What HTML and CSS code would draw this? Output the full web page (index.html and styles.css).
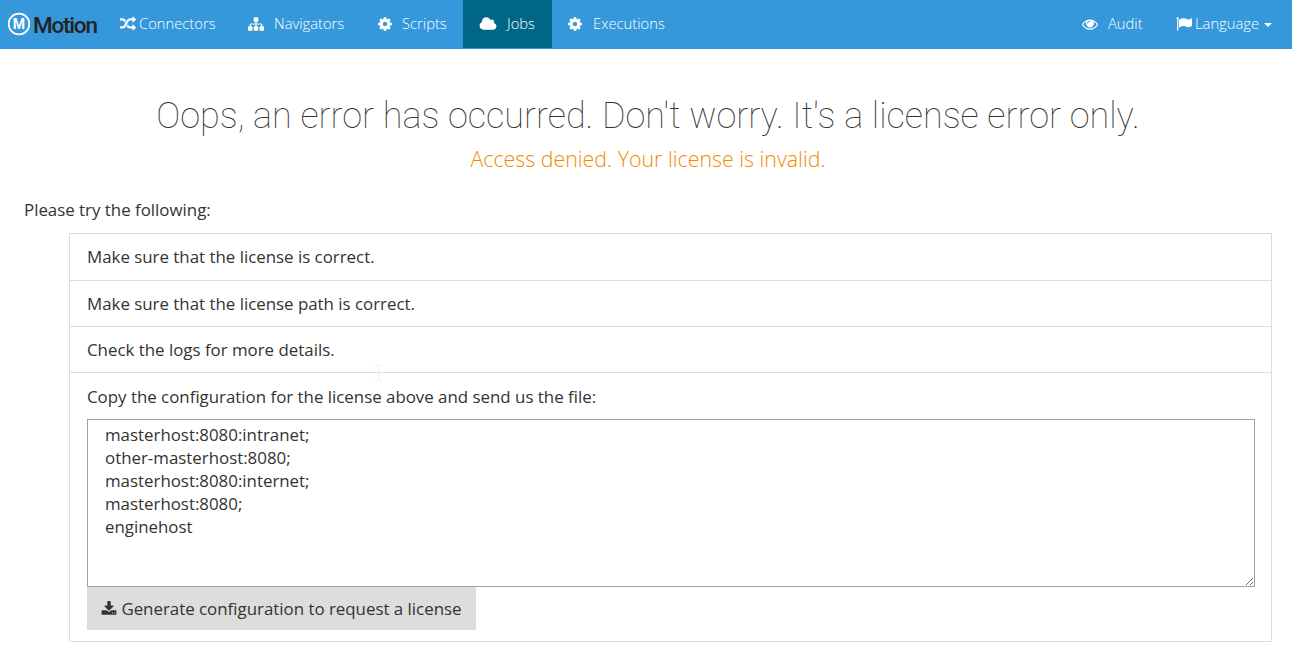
FILE: index.html
```html
<!DOCTYPE html>
<html lang="en">
<head>
<meta charset="utf-8">
<meta name="viewport" content="width=device-width, initial-scale=1">
<title>Motion</title>
<link rel="stylesheet" href="styles.css">
</head>
<body>

<nav class="navbar">
  <a class="brand" href="#">
    <svg class="brand-logo" viewBox="0 0 24 24">
      <circle cx="12" cy="12" r="10.3" fill="none" stroke="#fff" stroke-width="1.7"/>
      <text class="brand-letter" x="12" y="17" text-anchor="middle">M</text>
    </svg>
    <span class="brand-name">Motion</span>
  </a>
  <ul class="menu">
    <li><a class="connectors" href="#"><svg class="icon" viewBox="0 0 1792 1792"><path d="M666 481q-60 92-137 273-22-45-37-72.5t-40.5-63.5-51-56.5-63-35-81.5-14.5h-224q-14 0-23-9t-9-23v-192q0-14 9-23t23-9h224q250 0 410 225zm1126 799q0 14-9 23l-320 320q-9 9-23 9-13 0-22.5-9.5t-9.5-22.5v-192q-32 0-85 .5t-81 1-73-1-71-5-64-10.5-63-18.5-58-28.5-59-40-55-53.5-56-69.5q59-93 136-273 22 45 37 72.5t40.5 63.5 51 56.5 63 35 81.5 14.5h256v-192q0-14 9-23t23-9q12 0 24 10l319 319q9 9 9 23zm0-896q0 14-9 23l-320 320q-9 9-23 9-13 0-22.5-9.5t-9.5-22.5v-192h-256q-48 0-87 15t-69 45-51 61.5-45 77.5q-32 62-78 171-29 66-49.5 111t-54 105-64 100-74 83-90 68.5-106.5 42-128 16.5h-224q-14 0-23-9t-9-23v-192q0-14 9-23t23-9h224q48 0 87-15t69-45 51-61.5 45-77.5q32-62 78-171 29-66 49.5-111t54-105 64-100 74-83 90-68.5 106.5-42 128-16.5h256v-192q0-14 9-23t23-9q12 0 24 10l319 319q9 9 9 23z"/></svg><span>Connectors</span></a></li>
    <li><a class="navigators" href="#"><svg class="icon" viewBox="0 0 1792 1792"><path d="M1792 1248v320q0 40-28 68t-68 28h-320q-40 0-68-28t-28-68v-320q0-40 28-68t68-28h96v-192h-512v192h96q40 0 68 28t28 68v320q0 40-28 68t-68 28h-320q-40 0-68-28t-28-68v-320q0-40 28-68t68-28h96v-192h-512v192h96q40 0 68 28t28 68v320q0 40-28 68t-68 28h-320q-40 0-68-28t-28-68v-320q0-40 28-68t68-28h96v-192q0-52 38-90t90-38h512v-192h-96q-40 0-68-28t-28-68v-320q0-40 28-68t68-28h320q40 0 68 28t28 68v320q0 40-28 68t-68 28h-96v192h512q52 0 90 38t38 90v192h96q40 0 68 28t28 68z"/></svg><span>Navigators</span></a></li>
    <li><a class="scripts" href="#"><svg class="icon" viewBox="0 0 1792 1792"><path d="M1152 896q0-106-75-181t-181-75-181 75-75 181 75 181 181 75 181-75 75-181zm512-109v222q0 12-8 23t-20 13l-185 28q-19 54-39 91 35 50 107 138 10 12 10 25t-9 23q-27 37-99 108t-94 71q-12 0-26-9l-138-108q-44 23-91 38-16 136-29 186-7 28-36 28h-222q-14 0-24.5-8.5t-11.5-21.5l-28-184q-49-16-90-37l-141 107q-10 9-25 9-14 0-25-11-126-114-165-168-7-10-7-23 0-12 8-23 15-21 51-66.5t54-70.5q-27-50-41-99l-183-27q-13-2-21-12.5t-8-23.5v-222q0-12 8-23t19-13l186-28q14-46 39-92-40-57-107-138-10-12-10-24 0-10 9-23 26-36 98.5-107.5t94.5-71.5q13 0 26 10l138 107q44-23 91-38 16-136 29-186 7-28 36-28h222q14 0 24.5 8.5t11.5 21.5l28 184q49 16 90 37l142-107q9-9 24-9 13 0 25 10 129 119 165 170 7 8 7 22 0 12-8 23-15 21-51 66.5t-54 70.5q26 50 41 98l183 28q13 2 21 12.5t8 23.5z"/></svg><span>Scripts</span></a></li>
    <li class="active"><a class="jobs" href="#"><svg class="icon icon-cloud" viewBox="0 0 2048 1792"><path d="M1984 1152q0 159-112.5 271.5t-271.5 112.5h-1088q-185 0-316.5-131.5t-131.5-316.5q0-132 71-241.5t187-163.5q-2-28-2-43 0-212 150-362t362-150q158 0 286.5 88t187.5 230q70-62 166-62 106 0 181 75t75 181q0 75-41 138 129 30 213 134.5t84 239.5z"/></svg><span>Jobs</span></a></li>
    <li><a class="executions" href="#"><svg class="icon" viewBox="0 0 1792 1792"><path d="M1152 896q0-106-75-181t-181-75-181 75-75 181 75 181 181 75 181-75 75-181zm512-109v222q0 12-8 23t-20 13l-185 28q-19 54-39 91 35 50 107 138 10 12 10 25t-9 23q-27 37-99 108t-94 71q-12 0-26-9l-138-108q-44 23-91 38-16 136-29 186-7 28-36 28h-222q-14 0-24.5-8.5t-11.5-21.5l-28-184q-49-16-90-37l-141 107q-10 9-25 9-14 0-25-11-126-114-165-168-7-10-7-23 0-12 8-23 15-21 51-66.5t54-70.5q-27-50-41-99l-183-27q-13-2-21-12.5t-8-23.5v-222q0-12 8-23t19-13l186-28q14-46 39-92-40-57-107-138-10-12-10-24 0-10 9-23 26-36 98.5-107.5t94.5-71.5q13 0 26 10l138 107q44-23 91-38 16-136 29-186 7-28 36-28h222q14 0 24.5 8.5t11.5 21.5l28 184q49 16 90 37l142-107q9-9 24-9 13 0 25 10 129 119 165 170 7 8 7 22 0 12-8 23-15 21-51 66.5t-54 70.5q26 50 41 98l183 28q13 2 21 12.5t8 23.5z"/></svg><span>Executions</span></a></li>
  </ul>
  <ul class="menu menu-right">
    <li><a class="audit" href="#"><svg class="icon" viewBox="0 0 1792 1792"><path d="M1664 960q-152-236-381-353 61 104 61 225 0 185-131.5 316.5t-316.5 131.5-316.5-131.5-131.5-316.5q0-121 61-225-229 117-381 353 133 205 333.5 326.5t434.5 121.5 434.5-121.5 333.5-326.5zm-720-384q0-20-14-34t-34-14q-125 0-214.5 89.5t-89.5 214.5q0 20 14 34t34 14 34-14 14-34q0-86 61-147t147-61q20 0 34-14t14-34zm848 384q0 34-20 69-140 230-376.5 368.5t-499.5 138.5-499.5-139-376.5-368q-20-35-20-69t20-69q140-229 376.5-368t499.5-139 499.5 139 376.5 368q20 35 20 69z"/></svg><span>Audit</span></a></li>
    <li><a class="language" href="#"><svg class="icon" viewBox="0 0 1792 1792"><path d="M320 256q0 72-64 110v1266q0 13-9.5 22.5t-22.5 9.5h-64q-13 0-22.5-9.5t-9.5-22.5v-1266q-64-38-64-110 0-53 37.5-90.5t90.5-37.5 90.5 37.5 37.5 90.5zm1472 64v763q0 25-12.5 38.5t-39.5 27.5q-215 116-369 116-61 0-123.5-22t-108.5-48-115.5-48-142.5-22q-192 0-464 146-17 9-33 9-26 0-45-19t-19-45v-742q0-32 31-55 21-14 79-43 236-120 421-120 107 0 200 29t219 88q38 19 88 19 54 0 117.5-21t110-47 88-47 54.5-21q26 0 45 19t19 45z"/></svg><span>Language</span><b class="caret"></b></a></li>
  </ul>
</nav>

<div class="content">
  <h1>Oops, an error has occurred. Don't worry. It's a license error only.</h1>
  <p class="reason">Access denied. Your license is invalid.</p>

  <p class="try">Please try the following:</p>
  <ul class="steps">
    <li>Make sure that the license is correct.</li>
    <li>Make sure that the license path is correct.</li>
    <li>Check the logs for more details.</li>
    <li>
      <svg class="ibeam" viewBox="0 0 7 16"><path d="M0 .5h3M4 .5h3M3.500 1v14M0 15.500h3M4 15.500h3"/></svg>
      <label for="config">Copy the configuration for the license above and send us the file:</label>
      <textarea id="config" spellcheck="false">masterhost:8080:intranet;
other-masterhost:8080;
masterhost:8080:internet;
masterhost:8080;
enginehost</textarea>
      <button type="button" class="btn"><svg class="icon" viewBox="0 0 1792 1792"><path d="M1344 1344q0-26-19-45t-45-19-45 19-19 45 19 45 45 19 45-19 19-45zm256 0q0-26-19-45t-45-19-45 19-19 45 19 45 45 19 45-19 19-45zm128-224v320q0 40-28 68t-68 28h-1472q-40 0-68-28t-28-68v-320q0-40 28-68t68-28h465l135 136q58 56 136 56t136-56l136-136h464q40 0 68 28t28 68zm-325-569q17 41-14 70l-448 448q-18 19-45 19t-45-19l-448-448q-31-29-14-70 17-39 59-39h256v-448q0-26 19-45t45-19h256q26 0 45 19t19 45v448h256q42 0 59 39z"/></svg><span>Generate configuration to request a license</span></button>
    </li>
  </ul>
</div>

</body>
</html>
```
FILE: styles.css
```css
* {
  box-sizing: border-box;
}

body {
  margin: 0;
  background: #fff;
  color: #333;
  font-family: "Open Sans", sans-serif;
  font-size: 16.88px;
  line-height: 23px;
}

/* Navbar */
.navbar {
  display: flex;
  height: 49px;
  padding-bottom: 1px;
  background: #3498db;
  font-size: 14.75px;
  font-weight: 300;
}

.navbar a {
  display: flex;
  align-items: center;
  height: 48px;
  color: #fff;
  text-decoration: none;
}

.brand {
  width: 112px;
  padding-left: 7px;
}

.brand-logo {
  width: 24px;
  height: 24px;
}

.brand-letter {
  fill: #fff;
  font-family: Roboto, sans-serif;
  font-size: 14px;
  font-weight: 700;
}

.navbar .brand-name {
  margin: 2px 0 0 2px;
  color: #222;
  font-family: Roboto, sans-serif;
  font-size: 22.5px;
  font-weight: 500;
  letter-spacing: -1.2px;
}

.menu {
  display: flex;
  margin: 0;
  padding: 0;
  list-style: none;
}

.menu-right {
  margin-left: auto;
}

.icon {
  flex: none;
  width: 16px;
  height: 16px;
  fill: currentColor;
}

.menu a {
  padding: 0 17px 1px 16px;
}

.menu span {
  margin-left: 10px;
}

.menu .connectors {
  width: 120px;
  padding-left: 8px;
}

.menu .connectors span,
.menu .language span {
  margin-left: 3px;
}

.navigators {
  width: 129px;
}

.menu .scripts span {
  margin-left: 9px;
}

.menu .executions {
  padding-left: 15px;
}

.scripts {
  width: 102px;
}

.jobs {
  width: 89px;
}

.icon-cloud {
  width: 18px;
}

.active {
  background: #006687;
}

.audit {
  width: 94px;
}

.menu .language {
  width: 132px;
  padding-right: 0;
}

.caret {
  margin: 2px 0 0 5px;
  border-top: 4px solid #fff;
  border-left: 4px solid transparent;
  border-right: 4px solid transparent;
}

/* Error page */
.content {
  padding: 42px 20px 0 24px;
}

h1 {
  margin: 0;
  font-family: Roboto, sans-serif;
  font-size: 36px;
  font-weight: 100;
  line-height: 50px;
  text-align: center;
  white-space: nowrap;
}

.reason {
  margin: 4px 0 0;
  color: #f08a00;
  font-size: 21.35px;
  font-weight: 300;
  line-height: 28px;
  text-align: center;
}

.try {
  margin: 25px 0 12px;
}

.steps {
  margin: 0 0 0 45px;
  padding: 0;
  border: 1px solid #ddd;
  border-top: 0;
  list-style: none;
}

.steps li {
  position: relative;
  padding: 11px 16px 11px 17px;
  border-top: 1px solid #ddd;
}

.steps li:first-child {
  padding-bottom: 12px;
}

label {
  display: block;
  padding-top: 1px;
}

textarea {
  display: block;
  width: 100%;
  height: 168px;
  margin-top: 11px;
  padding: 3px 17px;
  border: 1px solid #a0a0a0;
  background: #fff;
  color: #333;
  font: inherit;
}

.btn {
  display: flex;
  align-items: center;
  height: 43px;
  padding: 0 14.5px 0 14px;
  border: 0;
  background: #ddd;
  color: #333;
  font: inherit;
}

.btn span {
  margin-left: 4.4px;
}

.ibeam {
  position: absolute;
  top: -8px;
  left: 305px;
  width: 7px;
  height: 16px;
  fill: none;
  stroke: #eee;
}
```
